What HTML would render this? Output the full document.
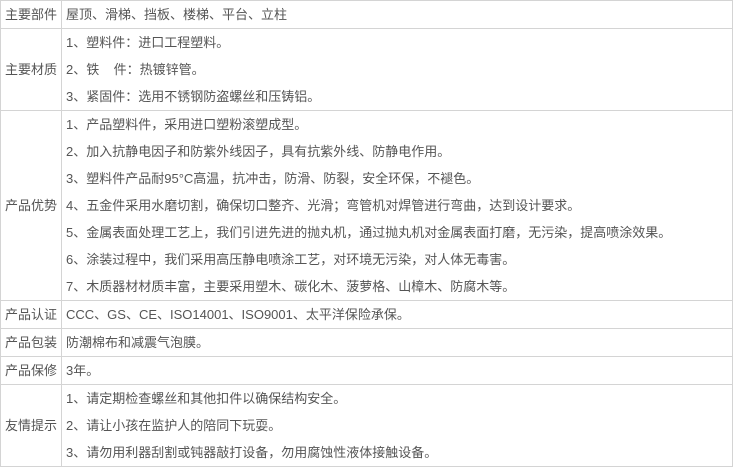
<!DOCTYPE html>
<html><head><meta charset="utf-8"><style>
body{margin:0;background:#fff;width:733px;height:466px;overflow:hidden}
table{border-collapse:collapse;position:absolute;left:0;top:0;width:733px;table-layout:fixed;font-family:"Liberation Sans","Noto Sans CJK SC",sans-serif;font-size:13px;color:#555}
td{border:1px solid #d4d4d4;padding:0 4px;line-height:27px;vertical-align:middle;white-space:nowrap}
td.h{width:56px;padding:0 0 0 4px}
p{margin:0;height:27px}
</style></head><body>
<table>
<colgroup><col style="width:61px"><col></colgroup>
<tr><td class="h">主要部件</td><td>屋顶、滑梯、挡板、楼梯、平台、立柱</td></tr>
<tr><td class="h">主要材质</td><td><p>1、塑料件：进口工程塑料。</p><p>2、铁&nbsp;&nbsp;&nbsp;&nbsp;件：热镀锌管。</p><p>3、紧固件：选用不锈钢防盗螺丝和压铸铝。</p></td></tr>
<tr><td class="h">产品优势</td><td><p>1、产品塑料件，采用进口塑粉滚塑成型。</p><p>2、加入抗静电因子和防紫外线因子，具有抗紫外线、防静电作用。</p><p>3、塑料件产品耐95°C高温，抗冲击，防滑、防裂，安全环保，不褪色。</p><p>4、五金件采用水磨切割，确保切口整齐、光滑；弯管机对焊管进行弯曲，达到设计要求。</p><p>5、金属表面处理工艺上，我们引进先进的抛丸机，通过抛丸机对金属表面打磨，无污染，提高喷涂效果。</p><p>6、涂装过程中，我们采用高压静电喷涂工艺，对环境无污染，对人体无毒害。</p><p>7、木质器材材质丰富，主要采用塑木、碳化木、菠萝格、山樟木、防腐木等。</p></td></tr>
<tr><td class="h">产品认证</td><td>CCC、GS、CE、ISO14001、ISO9001、太平洋保险承保。</td></tr>
<tr><td class="h">产品包装</td><td>防潮棉布和减震气泡膜。</td></tr>
<tr><td class="h">产品保修</td><td>3年。</td></tr>
<tr><td class="h">友情提示</td><td><p>1、请定期检查螺丝和其他扣件以确保结构安全。</p><p>2、请让小孩在监护人的陪同下玩耍。</p><p>3、请勿用利器刮割或钝器敲打设备，勿用腐蚀性液体接触设备。</p></td></tr>
</table>
</body></html>
